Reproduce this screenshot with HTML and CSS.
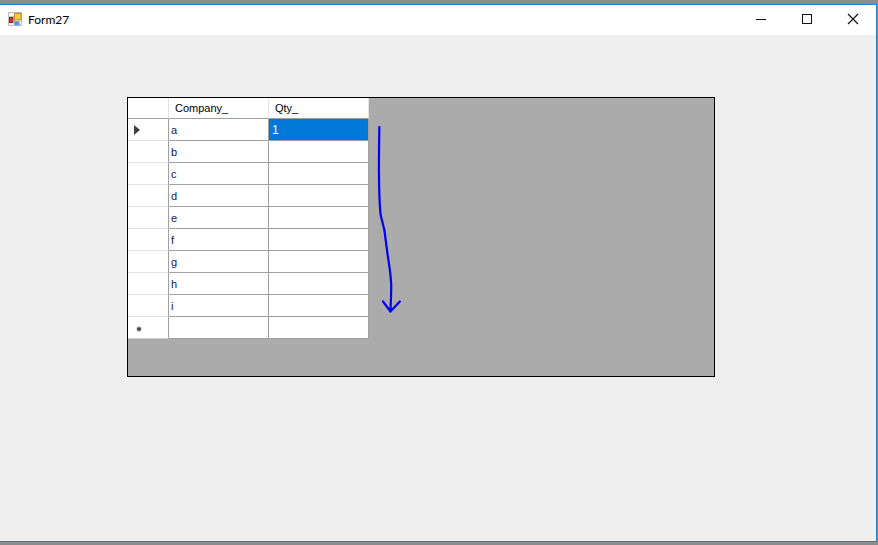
FILE: index.html
```html
<!DOCTYPE html>
<html lang="en">
<head>
<meta charset="utf-8">
<title>Form27</title>
<link rel="stylesheet" href="styles.css">
</head>
<body>
<div class="window">
  <header class="titlebar">
    <svg class="app-icon" width="14" height="14" viewBox="0 0 14 14">
      <rect x="0.5" y="0.5" width="13" height="13" fill="#f6f6f6" stroke="#bdbdbd"/>
      <path d="M0 4.500H6M6.500 0V14M6 12.500H14" stroke="#c8c8c8" fill="none"/>
      <rect x="6.500" y="1.500" width="6.500" height="6.500" fill="#f6c945" stroke="#b98f2c"/>
      <rect x="1.500" y="5.500" width="3.500" height="5" fill="#d8302c" stroke="#8f2a2a"/>
      <rect x="6.500" y="9.500" width="4.500" height="3.500" fill="#4f8be8" stroke="#7ea6dc"/>
    </svg>
    <span class="title">Form27</span>
    <div class="controls">
      <span class="ctl"><svg width="12" height="12" viewBox="0 0 12 12"><path d="M1 6.500H11" stroke="#111" fill="none"/></svg></span>
      <span class="ctl"><svg width="12" height="12" viewBox="0 0 12 12"><rect x="1.500" y="1.500" width="9" height="9" stroke="#111" fill="none"/></svg></span>
      <span class="ctl"><svg width="12" height="12" viewBox="0 0 12 12"><path d="M1 1L11 11M11 1L1 11" stroke="#111" stroke-width="1.200" fill="none"/></svg></span>
    </div>
  </header>
  <main class="client">
    <section class="panel">
      <div class="grid">
        <div class="cell rowhead colhead"></div>
        <div class="cell colhead">Company_</div>
        <div class="cell colhead">Qty_</div>

        <div class="cell rowhead"><span class="marker"></span></div>
        <div class="cell">a</div>
        <div class="cell selected">1</div>

        <div class="cell rowhead"></div><div class="cell">b</div><div class="cell"></div>
        <div class="cell rowhead"></div><div class="cell">c</div><div class="cell"></div>
        <div class="cell rowhead"></div><div class="cell">d</div><div class="cell"></div>
        <div class="cell rowhead"></div><div class="cell">e</div><div class="cell"></div>
        <div class="cell rowhead"></div><div class="cell">f</div><div class="cell"></div>
        <div class="cell rowhead"></div><div class="cell">g</div><div class="cell"></div>
        <div class="cell rowhead"></div><div class="cell">h</div><div class="cell"></div>
        <div class="cell rowhead"></div><div class="cell">i</div><div class="cell"></div>

        <div class="cell rowhead newrow">
          <svg class="star" width="6" height="6" viewBox="0 0 6 6"><path d="M3 0.500V5.500M0.800 1.700L5.200 4.300M5.200 1.700L0.800 4.300" stroke="#444" stroke-width="1.300" fill="none"/></svg>
        </div>
        <div class="cell"></div>
        <div class="cell"></div>
      </div>
      <svg class="scribble" width="40" height="220" viewBox="0 0 40 220">
        <path d="M11.300 29C11.200 45 10.800 62 11 78C11.100 92 11.500 105 12.500 116C13.500 122 15.500 127 16.500 133C17.500 141 18.500 148 19.500 156C21 166 22.800 175 23.200 187C23.300 195 22.800 205 22.500 213M15 203.500L22.500 213.500L31.800 203.500" fill="none" stroke="#0000f5" stroke-width="2.200" stroke-linecap="round" stroke-linejoin="round"/>
      </svg>
    </section>
  </main>
</div>
</body>
</html>
```
FILE: styles.css
```css
* { box-sizing: border-box; }
html, body { margin: 0; height: 100%; }
body {
  background: #8c8c8c;
  overflow: hidden;
  font-family: "Liberation Sans", Arial, sans-serif;
}
.window {
  margin-top: 4px;
  width: 877px;
  height: 538px;
  border-top: 1px solid #1883d7;
  border-right: 1px solid #1883d7;
  border-bottom: 1px solid #1883d7;
  display: flex;
  flex-direction: column;
  background: #efefef;
}
.titlebar {
  height: 30px;
  flex: none;
  background: #fff;
  display: flex;
  align-items: center;
  padding: 0 0 2px 8px;
}
.app-icon { flex: none; }
.title {
  margin-left: 6px;
  font: 12px Lato, "Open Sans", sans-serif;
  color: #000;
}
.controls { margin-left: auto; display: flex; }
.ctl {
  width: 46px;
  height: 28px;
  display: flex;
  align-items: center;
  justify-content: center;
}
.client {
  flex: 1;
  padding: 62px 0 0 127px;
}
.panel {
  position: relative;
  width: 588px;
  height: 280px;
  border: 1px solid #000;
  background: #ababab;
}
.grid {
  display: grid;
  grid-template-columns: 41px 100px 100px;
  grid-template-rows: 21px repeat(10, 22px);
  width: 241px;
  font-size: 11px;
  color: #000;
}
.cell {
  background: #fff;
  border-right: 1px solid #a0a0a0;
  border-bottom: 1px solid #a0a0a0;
  padding-left: 2px;
  display: flex;
  align-items: center;
  color: #14145e;
}
.colhead {
  padding-left: 6px;
  color: #000;
  border-right-color: #e3e3e3;
}
.rowhead {
  padding-left: 0;
  border-bottom-color: #e3e3e3;
}
.rowhead.colhead { border-bottom-color: #a0a0a0; }
.newrow { border-bottom-color: #cfcfcf; }
.selected {
  background: #0078d7;
  color: #fff;
  padding-left: 3px;
  font-size: 12px;
}
.marker {
  margin-left: 6px;
  width: 0;
  height: 0;
  border-left: 6px solid #404040;
  border-top: 5px solid transparent;
  border-bottom: 5px solid transparent;
}
.star {
  margin: 3px 0 0 8px;
}
.scribble {
  position: absolute;
  left: 240px;
  top: 0;
  overflow: visible;
}
```
